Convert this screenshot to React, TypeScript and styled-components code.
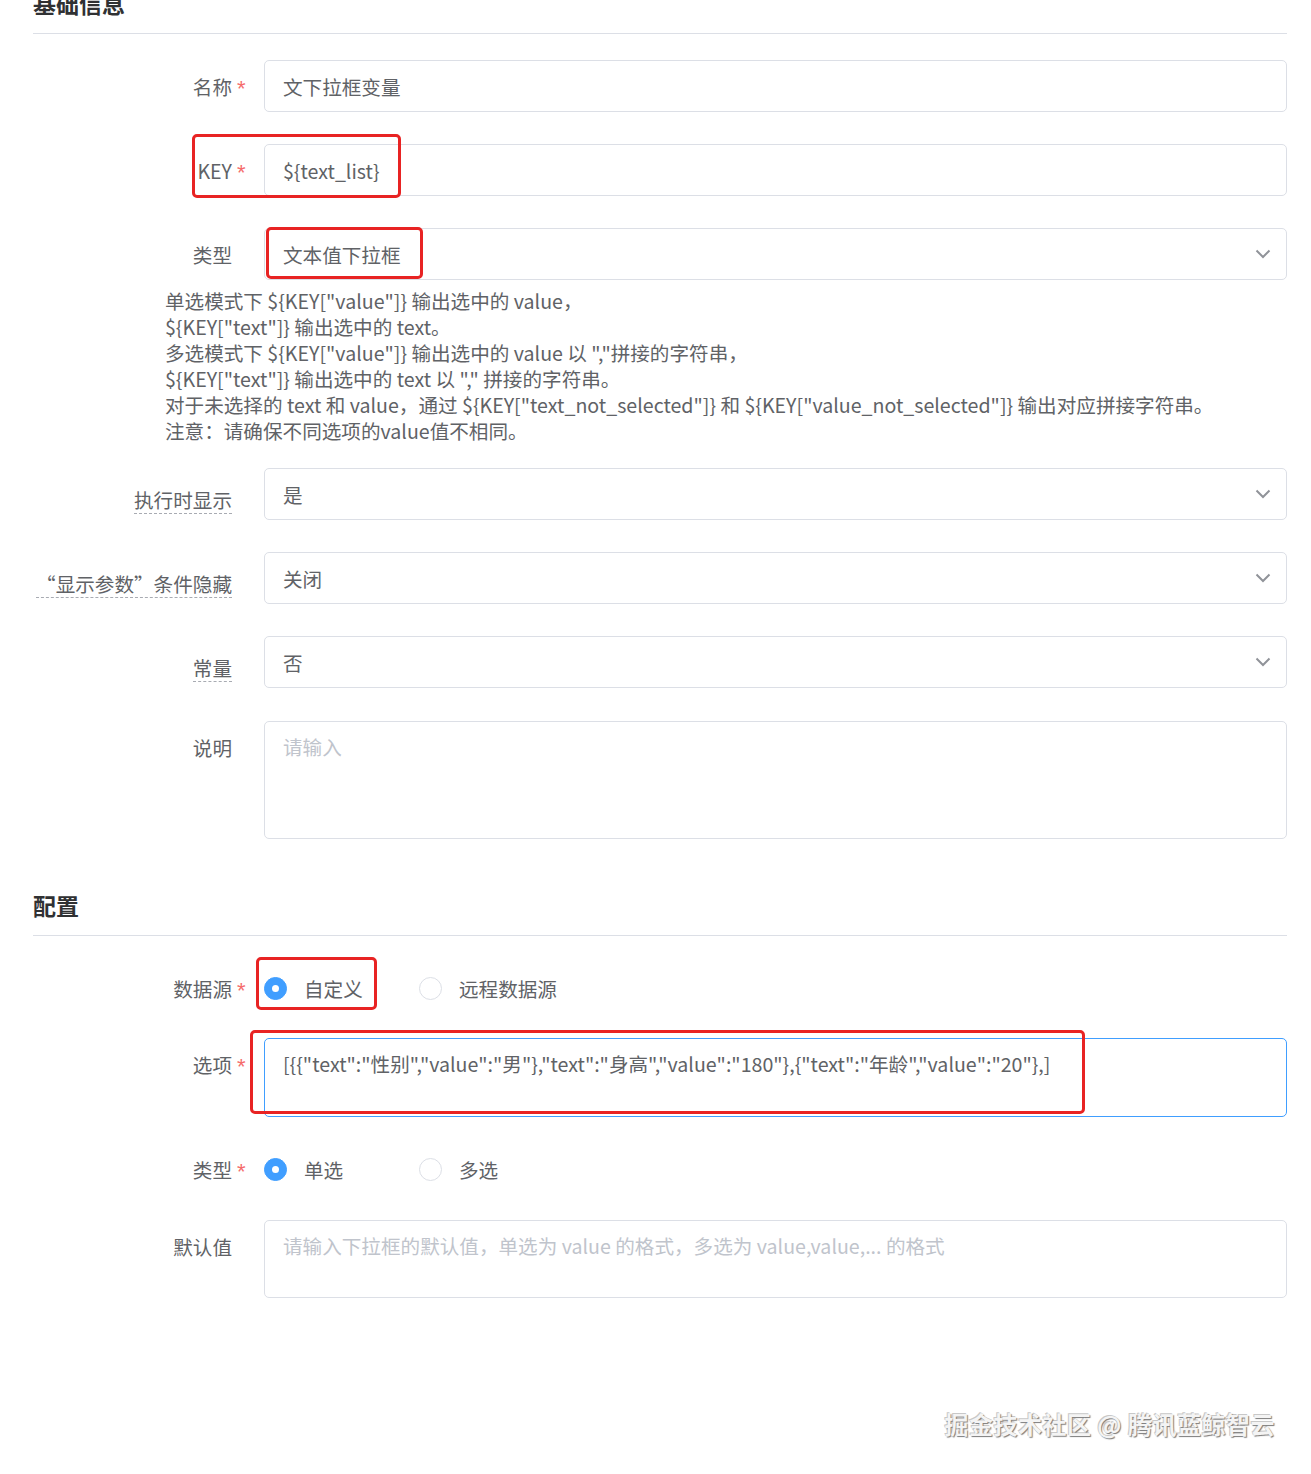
import React from "react";
import styled, { createGlobalStyle } from "styled-components";

const GlobalStyle = createGlobalStyle`
    body {
        margin: 0;
        background: #fff;
        font-family: "Noto Sans CJK SC", "Noto Sans", sans-serif;
    }
`;

const Page = styled.div`
    position: relative;
    min-height: 1474px;
    padding: 0 24px 0 33px;
    box-sizing: border-box;
    overflow: hidden;
    color: #606266;
    font-size: 19.6px;
`;

const SectionHeader = styled.div<{ $top: number }>`
    margin-top: ${(p) => p.$top}px;
    padding-bottom: 15px;
    border-bottom: 1px solid #dcdfe6;
    margin-bottom: 26px;
    font-size: 23px;
    line-height: 30px;
    font-weight: 700;
    color: #303133;
`;

const FormItem = styled.div<{ $gap: number }>`
    position: relative;
    display: grid;
    grid-template-columns: 231px 1fr;
    align-items: start;
    margin-bottom: ${(p) => p.$gap}px;
`;

const Label = styled.div`
    display: flex;
    justify-content: flex-end;
    align-items: center;
    height: 52px;
    white-space: nowrap;
    color: #606266;
`;

const Star = styled.span`
    width: 32px;
    padding: 5px 0 0 5px;
    box-sizing: border-box;
    color: #f56c6c;
    font-family: "Liberation Sans", sans-serif;
    font-size: 22px;
    line-height: 1;
`;

const Tip = styled.span`
    line-height: 26px;
    margin-top: 12px;
    border-bottom: 1px dashed #a8abb2;
`;

const Input = styled.div`
    height: 52px;
    display: flex;
    align-items: center;
    justify-content: space-between;
    padding: 0 15px 0 18px;
    border: 1px solid #dcdfe6;
    border-radius: 5px;
    box-sizing: border-box;
    color: #606266;
`;

const TextArea = styled.div<{ $height: number; $focus?: boolean }>`
    height: ${(p) => p.$height}px;
    padding: 12px 18px;
    border: 1px solid ${(p) => (p.$focus ? "#409eff" : "#dcdfe6")};
    border-radius: 5px;
    box-sizing: border-box;
    color: #606266;
    line-height: 26px;
    white-space: nowrap;
`;

const Placeholder = styled.span`
    color: #c0c4cc;
`;

const HelpText = styled.div`
    margin: 8px 0 24px 132px;
    line-height: 26px;
    color: #606266;
    white-space: nowrap;
`;

const HelpLine = styled.div`
    height: 26px;
`;

const RadioGroup = styled.div`
    display: flex;
    align-items: center;
    height: 52px;
`;

const RadioItem = styled.label`
    display: flex;
    align-items: center;
    gap: 17px;
    width: 155px;
    color: #606266;
`;

const RadioDot = styled.span<{ $checked?: boolean }>`
    width: 23px;
    height: 23px;
    border-radius: 50%;
    box-sizing: border-box;
    border: 1px solid ${(p) => (p.$checked ? "#409eff" : "#dcdfe6")};
    background: ${(p) => (p.$checked ? "#409eff" : "#fff")};
    display: flex;
    align-items: center;
    justify-content: center;
    &::after {
        content: "";
        width: 7px;
        height: 7px;
        border-radius: 50%;
        background: #fff;
        display: ${(p) => (p.$checked ? "block" : "none")};
    }
`;

const Highlight = styled.div<{ $l: number; $t: number; $w: number; $h: number }>`
    position: absolute;
    left: ${(p) => p.$l}px;
    top: ${(p) => p.$t}px;
    width: ${(p) => p.$w}px;
    height: ${(p) => p.$h}px;
    border: 3px solid #e82323;
    border-radius: 5px;
    box-sizing: border-box;
    pointer-events: none;
`;

const Watermark = styled.div`
    position: absolute;
    right: 36px;
    bottom: 34px;
    font-size: 24px;
    line-height: 32px;
    font-weight: 700;
    color: #f4f4f4;
    text-shadow: 1px 1px 1px #7a7a7a, -1px -1px 0 #c8c8c8;
    letter-spacing: 0.5px;
`;

function Chevron() {
    return (
        <svg width="16" height="10" viewBox="0 0 16 10">
            <polyline points="1.5,1.5 8,8 14.5,1.5" fill="none" stroke="#909399" strokeWidth="2" />
        </svg>
    );
}

function FieldLabel({ text, required, tip }: { text: string; required?: boolean; tip?: boolean }) {
    return (
        <Label>
            {tip ? <Tip>{text}</Tip> : <span>{text}</span>}
            <Star>{required ? "*" : ""}</Star>
        </Label>
    );
}

const helpLines = [
    '单选模式下 ${KEY["value"]} 输出选中的 value，',
    '${KEY["text"]} 输出选中的 text。',
    '多选模式下 ${KEY["value"]} 输出选中的 value 以 ","拼接的字符串，',
    '${KEY["text"]} 输出选中的 text 以 "," 拼接的字符串。',
    '对于未选择的 text 和 value，通过 ${KEY["text_not_selected"]} 和 ${KEY["value_not_selected"]} 输出对应拼接字符串。',
    "注意：请确保不同选项的value值不相同。",
];

export default function App() {
    return (
        <>
            <GlobalStyle />
            <Page>
                <SectionHeader $top={-12}>基础信息</SectionHeader>

                <FormItem $gap={32}>
                    <FieldLabel text="名称" required />
                    <Input>文下拉框变量</Input>
                </FormItem>

                <FormItem $gap={32}>
                    <FieldLabel text="KEY" required />
                    <Input>{"${text_list}"}</Input>
                    <Highlight $l={159} $t={-10} $w={209} $h={64} />
                </FormItem>

                <FormItem $gap={0}>
                    <FieldLabel text="类型" />
                    <Input>
                        文本值下拉框
                        <Chevron />
                    </Input>
                    <Highlight $l={233} $t={-1} $w={157} $h={52} />
                </FormItem>
                <HelpText>
                    {helpLines.map((line) => (
                        <HelpLine key={line}>{line}</HelpLine>
                    ))}
                </HelpText>

                <FormItem $gap={32}>
                    <FieldLabel text="执行时显示" tip />
                    <Input>
                        是
                        <Chevron />
                    </Input>
                </FormItem>

                <FormItem $gap={32}>
                    <FieldLabel text="“显示参数”条件隐藏" tip />
                    <Input>
                        关闭
                        <Chevron />
                    </Input>
                </FormItem>

                <FormItem $gap={33}>
                    <FieldLabel text="常量" tip />
                    <Input>
                        否
                        <Chevron />
                    </Input>
                </FormItem>

                <FormItem $gap={0}>
                    <FieldLabel text="说明" />
                    <TextArea $height={118}>
                        <Placeholder>请输入</Placeholder>
                    </TextArea>
                </FormItem>

                <SectionHeader $top={51}>配置</SectionHeader>

                <FormItem $gap={24}>
                    <FieldLabel text="数据源" required />
                    <RadioGroup>
                        <RadioItem>
                            <RadioDot $checked />
                            自定义
                        </RadioItem>
                        <RadioItem>
                            <RadioDot />
                            远程数据源
                        </RadioItem>
                    </RadioGroup>
                    <Highlight $l={223} $t={-5} $w={121} $h={53} />
                </FormItem>

                <FormItem $gap={26}>
                    <FieldLabel text="选项" required />
                    <TextArea $height={79} $focus>
                        {'[{{"text":"性别","value":"男"},"text":"身高","value":"180"},{"text":"年龄","value":"20"},]'}
                    </TextArea>
                    <Highlight $l={217} $t={-8} $w={835} $h={84} />
                </FormItem>

                <FormItem $gap={25}>
                    <FieldLabel text="类型" required />
                    <RadioGroup>
                        <RadioItem>
                            <RadioDot $checked />
                            单选
                        </RadioItem>
                        <RadioItem>
                            <RadioDot />
                            多选
                        </RadioItem>
                    </RadioGroup>
                </FormItem>

                <FormItem $gap={0}>
                    <FieldLabel text="默认值" />
                    <TextArea $height={78}>
                        <Placeholder>请输入下拉框的默认值，单选为 value 的格式，多选为 value,value,... 的格式</Placeholder>
                    </TextArea>
                </FormItem>

                <Watermark>掘金技术社区 @ 腾讯蓝鲸智云</Watermark>
            </Page>
        </>
    );
}
